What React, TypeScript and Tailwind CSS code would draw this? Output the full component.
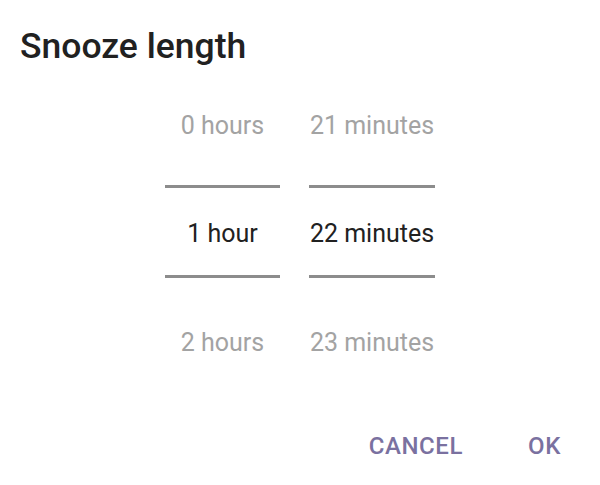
import React from "react";

const font = { fontFamily: "Roboto, 'Noto Sans', sans-serif" };

// one wheel of the picker: faded value, selected value, faded value
function Wheel({ items, width }: { items: string[]; width: string }) {
  return (
    <div className={`flex flex-col items-center ${width}`}>
      <div className="h-[54px] w-full flex items-center justify-center text-[25px] text-[#a3a3a3]">
        {items[0]}
      </div>
      <div className="mt-[32px] h-[3px] w-full bg-[#8c8c8c]" />
      <div className="h-[87px] pt-[5px] w-full flex items-center justify-center text-[25px] text-[#212121]">
        {items[1]}
      </div>
      <div className="h-[3px] w-full bg-[#8c8c8c]" />
      <div className="mt-[38px] h-[54px] w-full flex items-center justify-center text-[25px] text-[#a3a3a3]">
        {items[2]}
      </div>
    </div>
  );
}

export default function App() {
  return (
    <div className="w-[600px] h-[485px] bg-white flex flex-col overflow-hidden" style={font}>
      {/* Title */}
      <h1 className="mt-[26px] pl-[20px] text-[35.5px] leading-[40px] font-medium text-[#212121]">
        Snooze length
      </h1>

      {/* Pickers */}
      <div className="mt-[33px] flex justify-center gap-[29px]">
        <Wheel items={["0 hours", "1 hour", "2 hours"]} width="w-[115px]" />
        <Wheel items={["21 minutes", "22 minutes", "23 minutes"]} width="w-[126px]" />
      </div>

      {/* Buttons */}
      <div className="mt-auto mb-[23px] flex justify-end items-center pr-[39px] gap-[65px]">
        <button className="text-[24px] leading-[32px] font-medium tracking-[0.6px] text-[#7a71a0]">
          CANCEL
        </button>
        <button className="text-[24px] leading-[32px] font-medium tracking-[0.6px] text-[#7a71a0]">
          OK
        </button>
      </div>
    </div>
  );
}
